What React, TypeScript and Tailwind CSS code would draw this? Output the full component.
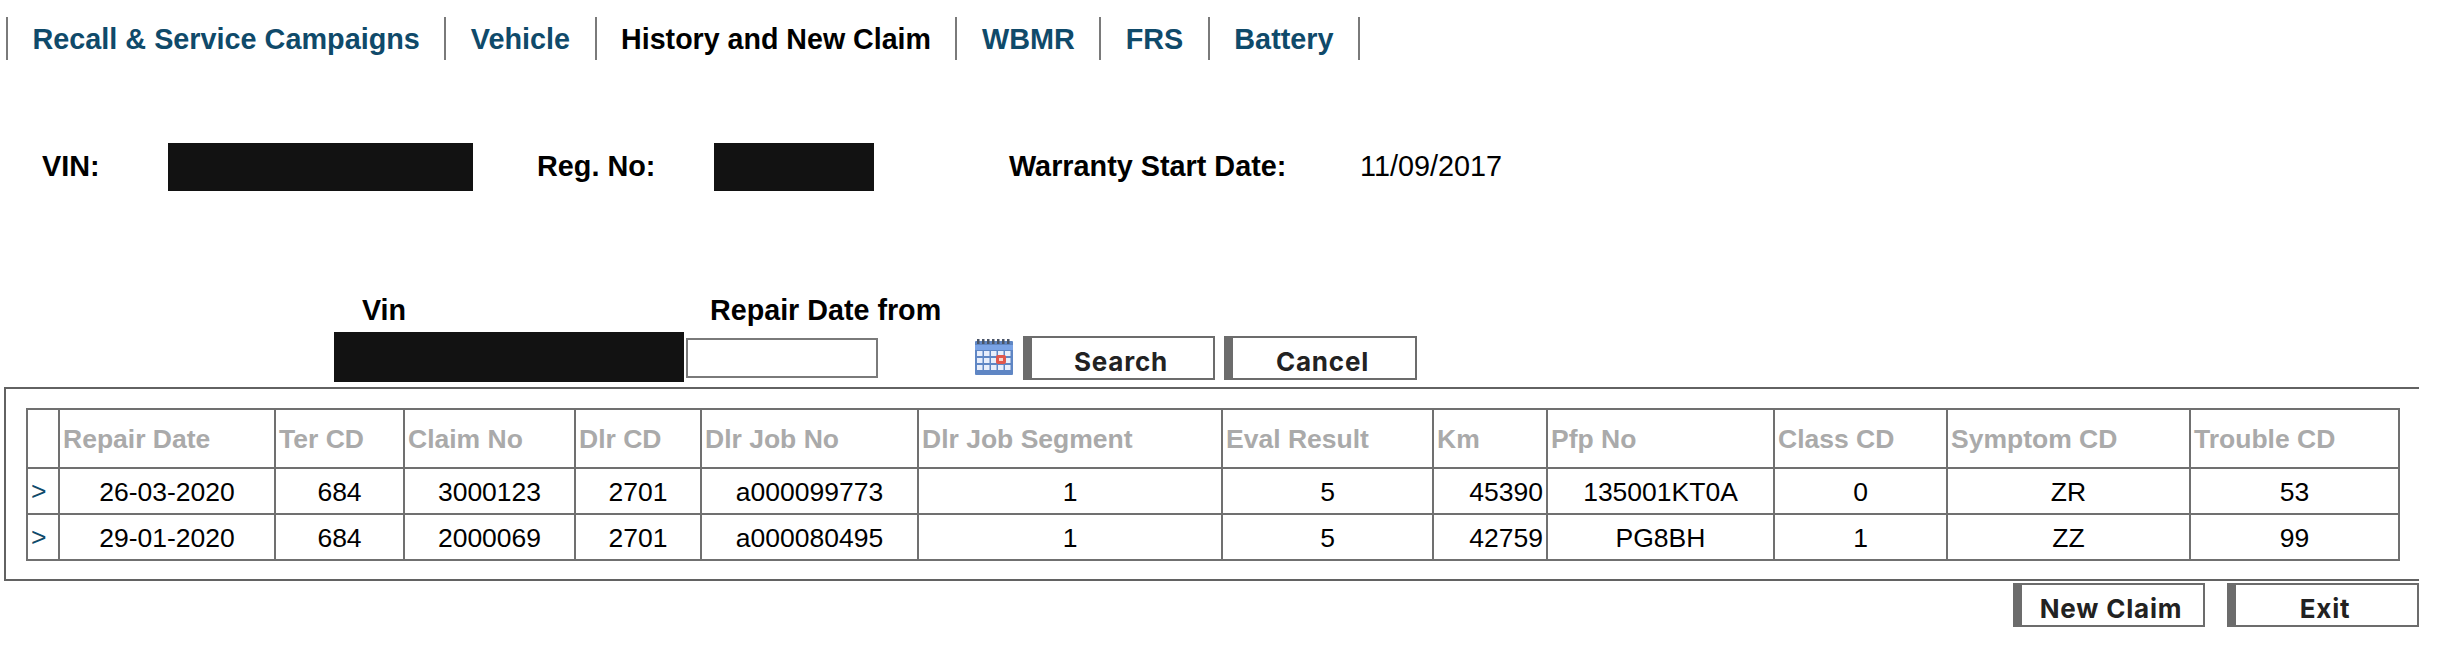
const headers = ["", "Repair Date", "Ter CD", "Claim No", "Dlr CD", "Dlr Job No", "Dlr Job Segment", "Eval Result", "Km", "Pfp No", "Class CD", "Symptom CD", "Trouble CD"];
const colWidths = ["w-[32px]", "w-[216px]", "w-[129px]", "w-[171px]", "w-[126px]", "w-[217px]", "w-[304px]", "w-[211px]", "w-[114px]", "w-[227px]", "w-[173px]", "w-[243px]", "w-[209px]"];
const rows = [
  ["26-03-2020", "684", "3000123", "2701", "a000099773", "1", "5", "45390", "135001KT0A", "0", "ZR", "53"],
  ["29-01-2020", "684", "2000069", "2701", "a000080495", "1", "5", "42759", "PG8BH", "1", "ZZ", "99"],
];
const tabs = [
  { label: "Recall & Service Campaigns", active: false },
  { label: "Vehicle", active: false },
  { label: "History and New Claim", active: true },
  { label: "WBMR", active: false },
  { label: "FRS", active: false },
  { label: "Battery", active: false },
];

function Btn({ label, w }: { label: string; w: string }) {
  return (
    <button className={`${w} h-[44px] bg-white border-2 border-l-[9px] border-[#6c6c6c] text-[#222222] font-bold text-[26px] leading-none pt-[8px] pr-[3px] font-['Inter',sans-serif] tracking-[0.8px]`}>
      {label}
    </button>
  );
}

function CalendarIcon() {
  const ys = [12, 19, 26];
  return (
    <svg width="38" height="36" viewBox="0 0 38 36" className="block">
      <rect x="0" y="2" width="38" height="34" rx="1" fill="#5f86c4" />
      <rect x="0" y="6" width="38" height="5" fill="#7aa3e6" />
      {[2, 7, 12, 17, 22, 27, 32].map((x) => (
        <rect key={x} x={x} y="0" width="2.5" height="5" fill="#4a5568" />
      ))}
      {ys.map((y) =>
        [2, 9, 16, 23, 30].map((x) => (
          <rect key={`${x}-${y}`} x={x} y={y} width="5.5" height="5" fill="#e8eefb" />
        ))
      )}
      <rect x="21" y="16" width="10" height="9" rx="2" fill="#e2574c" />
      <rect x="24" y="19" width="4" height="3" fill="#f6d5cf" />
    </svg>
  );
}

export default function App() {
  return (
    <div className="w-[2440px] h-[650px] bg-white overflow-hidden text-black font-['Liberation_Sans',Arial,sans-serif]">
      <nav className="flex ml-[6px] mt-[17px] h-[43px]">
        {tabs.map((t) => (
          <div key={t.label} className="flex items-center h-[43px] border-l-2 border-[#7a7a7a] px-[24.5px] pt-[2px] last:border-r-2">
            <span className={`font-bold leading-none ${t.active ? "text-[28.6px] text-black" : "text-[28.8px] text-[#0f4a6a]"}`}>{t.label}</span>
          </div>
        ))}
      </nav>

      <div className="flex items-center h-[48px] mt-[83px] text-[28.8px] leading-none">
        <span className="ml-[42px] w-[126px] mb-[2px] font-bold">VIN:</span>
        <div className="w-[305px] h-[48px] shrink-0 bg-[#121212]" />
        <span className="ml-[64px] w-[177px] mb-[2px] font-bold">Reg. No:</span>
        <div className="w-[160px] h-[48px] shrink-0 bg-[#121212]" />
        <span className="ml-[135px] w-[351px] mb-[2px] font-bold">Warranty Start Date:</span>
        <span className="mb-[2px]">11/09/2017</span>
      </div>

      <div className="flex h-[32px] mt-[102px] pt-[2px] items-center text-[28.7px] font-bold leading-none">
        <span className="ml-[362px] w-[348px]">Vin</span>
        <span>Repair Date from</span>
      </div>

      <div className="flex items-start h-[50px] mt-[7px] ml-[334px]">
        <div className="w-[350px] h-[50px] bg-[#121212]" />
        <input readOnly className="ml-[2px] mt-[6px] w-[192px] h-[40px] border-2 border-[#7a7a7a] bg-white" />
        <div className="ml-[97px] mt-[7px]"><CalendarIcon /></div>
        <div className="ml-[10px] mt-[4px] flex gap-[9px]">
          <Btn label="Search" w="w-[192px]" />
          <Btn label="Cancel" w="w-[193px]" />
        </div>
      </div>

      <div className="ml-[4px] mt-[5px] h-[194px] w-[2415px] border-t-2 border-b-2 border-l-2 border-[#626262] pt-[19px] pl-[20px]">
        <table className="table-fixed border-collapse w-[2372px] text-[26.5px] leading-none">
          <colgroup>
            {colWidths.map((w, i) => <col key={i} className={w} />)}
          </colgroup>
          <thead>
            <tr className="h-[59px]">
              {headers.map((h, i) => (
                <th key={i} className="border-2 border-[#707070] text-left font-bold text-[#aaaaaa] px-[3px] pt-[2px]">{h}</th>
              ))}
            </tr>
          </thead>
          <tbody>
            {rows.map((r) => (
              <tr key={r[0]} className="h-[46px]">
                <td className="border-2 border-[#707070] text-left text-[#0f4a6a] px-[3px]">&gt;</td>
                {r.map((c, i) => (
                  <td key={i} className={`border-2 border-[#707070] pt-[2px] ${i === 7 ? "text-right pr-[3px]" : "text-center"}`}>{c}</td>
                ))}
              </tr>
            ))}
          </tbody>
        </table>
      </div>

      <div className="flex justify-end gap-[22px] mt-[2px] mr-[21px]">
        <Btn label="New Claim" w="w-[192px]" />
        <Btn label="Exit" w="w-[192px]" />
      </div>
    </div>
  );
}
